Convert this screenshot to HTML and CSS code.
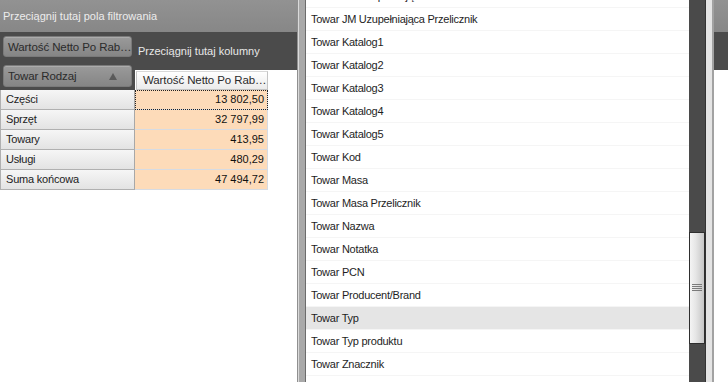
FILE: index.html
```html
<!DOCTYPE html>
<html lang="pl">
<head>
<meta charset="utf-8">
<link rel="stylesheet" href="styles.css">
</head>
<body>
<div class="app">
  <section class="pivot">
    <div class="filter-bar">Przeciągnij tutaj pola filtrowania</div>
    <div class="pivot-head">
      <div class="row-area">
        <div class="field-btn"><span>Wartość Netto Po Rab…</span></div>
        <div class="field-btn sort"><span>Towar Rodzaj</span><i class="tri"></i></div>
      </div>
      <div class="col-part">
        <div class="col-drop">Przeciągnij tutaj kolumny</div>
        <div class="col-headers"><div class="col-head">Wartość Netto Po Rab…</div></div>
      </div>
    </div>
    <div class="rows">
      <div class="row"><div class="rh">Części</div><div class="val focus">13 802,50</div></div>
      <div class="row"><div class="rh">Sprzęt</div><div class="val">32 797,99</div></div>
      <div class="row"><div class="rh">Towary</div><div class="val">413,95</div></div>
      <div class="row"><div class="rh">Usługi</div><div class="val">480,29</div></div>
      <div class="row"><div class="rh">Suma końcowa</div><div class="val">47 494,72</div></div>
    </div>
  </section>
  <div class="splitter"></div>
  <section class="fields">
    <ul class="list">
      <li>Towar JM Uzupełniająca</li>
      <li>Towar JM Uzupełniająca Przelicznik</li>
      <li>Towar Katalog1</li>
      <li>Towar Katalog2</li>
      <li>Towar Katalog3</li>
      <li>Towar Katalog4</li>
      <li>Towar Katalog5</li>
      <li>Towar Kod</li>
      <li>Towar Masa</li>
      <li>Towar Masa Przelicznik</li>
      <li>Towar Nazwa</li>
      <li>Towar Notatka</li>
      <li>Towar PCN</li>
      <li>Towar Producent/Brand</li>
      <li class="hover">Towar Typ</li>
      <li>Towar Typ produktu</li>
      <li>Towar Znacznik</li>
    </ul>
    <div class="scrollbar">
      <div class="thumb"><i class="grip"></i></div>
    </div>
  </section>
  <div class="splitter2"></div>
  <section class="side">
    <div class="side-top"></div>
    <div class="side-dark"></div>
  </section>
</div>
</body>
</html>
```

FILE: styles.css
```css
* { box-sizing: border-box; }
html, body {
  margin: 0;
  padding: 0;
  width: 728px;
  height: 382px;
  overflow: hidden;
  background: #fff;
  font-family: Tahoma, "Liberation Sans", "DejaVu Sans", sans-serif;
  font-size: 11px;
  color: #1e1e1e;
}
.app {
  display: flex;
  height: 382px;
}

/* ---------- pivot ---------- */
.pivot {
  width: 297px;
  flex: none;
  display: flex;
  flex-direction: column;
  background: #fff;
}
.filter-bar {
  height: 32px;
  background: linear-gradient(#929292, #878787);
  color: #ececec;
  padding: 10px 0 0 3px;
  white-space: nowrap;
}
.pivot-head {
  display: flex;
  height: 58px;
}
.row-area {
  width: 135px;
  flex: none;
  background:
    radial-gradient(ellipse 160px 40px at 130px 95px, #5e5e5e 0, #5a5a5a 60%, rgba(0,0,0,0) 62%),
    #4b4b4b;
  padding: 4px 3px 0 3px;
  display: flex;
  flex-direction: column;
  gap: 8px;
}
.field-btn {
  height: 21px;
  width: 129px;
  border-radius: 3px;
  background: linear-gradient(#9a9a9a, #858585);
  border: 1px solid #7a7a7a;
  box-shadow: inset 0 1px 0 rgba(255,255,255,0.18);
  color: #2b2b2b;
  font-size: 11.5px;
  letter-spacing: -0.1px;
  display: flex;
  align-items: center;
  padding: 0 0 0 4px;
  white-space: nowrap;
}
.field-btn.sort { height: 22px; }
.field-btn .tri {
  margin-left: auto;
  margin-right: 14px;
  width: 0;
  height: 0;
  border-left: 4px solid transparent;
  border-right: 4px solid transparent;
  border-bottom: 7px solid #5a5a5a;
}
.col-part {
  flex: 1;
  display: flex;
  flex-direction: column;
}
.col-drop {
  height: 38px;
  background: #4b4b4b;
  color: #e8e8e8;
  font-size: 11px;
  padding: 13px 0 0 3px;
  white-space: nowrap;
}
.col-headers {
  height: 20px;
  padding: 1px 0 0 1px;
  background: #fff;
}
.col-head {
  width: 132px;
  height: 19px;
  background: linear-gradient(#ffffff, #ebebeb);
  border: 1px solid #c4c4c4;
  border-top-color: #d8d8d8;
  color: #2b2b2b;
  font-size: 11.5px;
  letter-spacing: -0.1px;
  padding: 2px 0 0 6px;
  white-space: nowrap;
}
.rows { display: flex; flex-direction: column; }
.row { display: flex; height: 20px; }
.rh {
  width: 135px;
  background: linear-gradient(#f6f6f6, #e3e3e3);
  border-right: 1px solid #a8a8a8;
  border-bottom: 1px solid #b0b0b0;
  border-left: 1px solid #b0b0b0;
  color: #222;
  font-size: 11px;
  letter-spacing: -0.2px;
  padding: 3px 0 0 5px;
  white-space: nowrap;
}
.val {
  width: 133px;
  background: #fddbb9;
  border-bottom: 1px solid #d6dbe3;
  border-right: 1px solid #d6dbe3;
  text-align: right;
  font-size: 11px;
  padding: 3px 3px 0 0;
  color: #111;
}
.val.focus {
  outline: 1px dotted #222;
  outline-offset: -1px;
}

/* ---------- splitters ---------- */
.splitter {
  width: 9px;
  flex: none;
  background: linear-gradient(to right, #909090 0 1px, #dadada 1px 2px, #a9a9a9 2px 8px, #6c6c6c 8px 9px);
}
.splitter2 {
  width: 8px;
  flex: none;
  background: linear-gradient(to right, #e4e4e4 0 6px, #a2a2a2 6px 8px);
}

/* ---------- field list ---------- */
.fields {
  width: 400px;
  flex: none;
  display: flex;
  background: #fff;
}
.list {
  list-style: none;
  margin: -15px 0 0 0;
  padding: 0;
  width: 383px;
  flex: none;
}
.list li {
  height: 23px;
  padding: 5px 0 0 5px;
  border-bottom: 1px solid #f5f5f5;
  color: #1e1e1e;
  font-size: 11px;
  letter-spacing: -0.25px;
  white-space: nowrap;
}
.list li.hover { background: #e5e5e5; }
.scrollbar {
  width: 17px;
  flex: none;
  background: #4a4a4a;
  border-right: 1px solid #333;
  padding-top: 232px;
}
.thumb {
  width: 16px;
  height: 112px;
  background: linear-gradient(to right, #f4f4f4, #e6e6e6 40%, #c6c6c6);
  border: 1px solid #2e2e2e;
  display: flex;
  align-items: center;
  justify-content: center;
}
.grip {
  width: 10px;
  height: 8px;
  background: repeating-linear-gradient(#7a7a7a 0 1px, transparent 1px 2px);
}

/* ---------- side pane ---------- */
.side {
  flex: 1;
  display: flex;
  flex-direction: column;
}
.side-top { height: 32px; background: linear-gradient(#929292, #878787); }
.side-dark { height: 38px; background: #4b4b4b; }
```
